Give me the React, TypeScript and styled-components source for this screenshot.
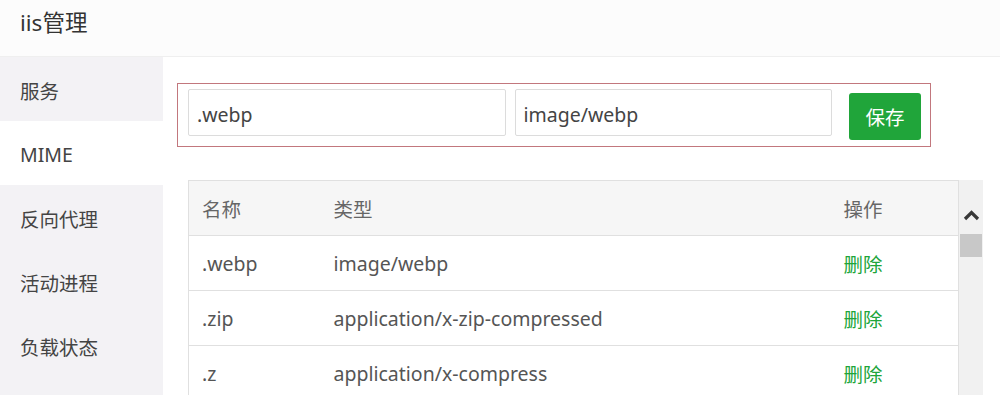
import React from "react";
import styled, { createGlobalStyle } from "styled-components";

const rows = [
  { ext: ".webp", mime: "image/webp" },
  { ext: ".zip", mime: "application/x-zip-compressed" },
  { ext: ".z", mime: "application/x-compress" },
];

const menu = ["服务", "MIME", "反向代理", "活动进程", "负载状态"];

const App = () => {
  return (
    <Page>
      <GlobalStyle />
      <Header>iis管理</Header>
      <Body>
        <Sidebar>
          {menu.map((m) => (
            <NavItem key={m} $active={m === "MIME"}>
              {m}
            </NavItem>
          ))}
        </Sidebar>

        <Main>
          <FormBox>
            <Field defaultValue=".webp" />
            <Field defaultValue="image/webp" $gap />
            <SaveButton>保存</SaveButton>
          </FormBox>

          <TableWrap>
            <Table>
              <colgroup>
                <col style={{ width: 132 }} />
                <col style={{ width: 510 }} />
                <col />
              </colgroup>
              <thead>
                <tr>
                  <Th>名称</Th>
                  <Th>类型</Th>
                  <Th>操作</Th>
                </tr>
              </thead>
              <tbody>
                {rows.map((r) => (
                  <tr key={r.ext}>
                    <Td>{r.ext}</Td>
                    <Td>{r.mime}</Td>
                    <Td>
                      <DeleteLink>删除</DeleteLink>
                    </Td>
                  </tr>
                ))}
              </tbody>
            </Table>

            <Scrollbar>
              <ScrollUp>
                <svg width="17" height="11" viewBox="0 0 17 11">
                  <polyline
                    points="2,9 8.5,2.5 15,9"
                    fill="none"
                    stroke="#383838"
                    strokeWidth="3.2"
                  />
                </svg>
              </ScrollUp>
              <Thumb />
            </Scrollbar>
          </TableWrap>
        </Main>
      </Body>
    </Page>
  );
};

export default App;

const GlobalStyle = createGlobalStyle`
  body {
    margin: 0;
    background: #ffffff;
    font-family: "Noto Sans", "Noto Sans CJK SC", sans-serif;
  }
`;

const Page = styled.div`
  width: 1000px;
  height: 395px;
  overflow: hidden;
  background: #ffffff;
`;

const Header = styled.div`
  height: 56px;
  border-bottom: 1px solid #efefef;
  background: #fcfcfc;
  padding: 1px 20px 0;
  box-sizing: content-box;
  height: 55px;
  line-height: 44px;
  font-size: 22.5px;
  color: #333;
`;

const Body = styled.div`
  display: flex;
  height: 338px;
`;

const Sidebar = styled.div`
  width: 163px;
  flex-shrink: 0;
  background: #f3f2f5;
  display: flex;
  flex-direction: column;
`;

const NavItem = styled.div<{ $active?: boolean }>`
  box-sizing: border-box;
  height: 64px;
  padding: 3px 0 0 20px;
  display: flex;
  align-items: center;
  font-size: 19.5px;
  color: #444;
  background: ${(p) => (p.$active ? "#ffffff" : "transparent")};
`;

const Main = styled.div`
  flex: 1;
  padding: 26px 0 0 14px;
`;

const FormBox = styled.div`
  box-sizing: border-box;
  width: 754px;
  height: 64px;
  border: 1px solid #c2777d;
  padding: 5px 9px 0 10px;
  display: flex;
  align-items: flex-start;
`;

const Field = styled.input<{ $gap?: boolean }>`
  box-sizing: border-box;
  width: 318px;
  height: 47px;
  margin-left: ${(p) => (p.$gap ? "9px" : "0")};
  border: 1px solid #dcdcdc;
  border-radius: 2px;
  padding: 4px 8px 0;
  font-family: inherit;
  font-size: 19.5px;
  color: #444;
  outline: none;
`;

const SaveButton = styled.button`
  width: 72px;
  height: 47px;
  margin: 4px 0 0 17px;
  border: none;
  border-radius: 3px;
  background: #20a53a;
  color: #fff;
  font-family: inherit;
  font-size: 19.5px;
  padding: 0;
`;

const TableWrap = styled.div`
  display: flex;
  margin: 33px 0 0 11px;
`;

const Table = styled.table`
  width: 771px;
  border-collapse: collapse;
  table-layout: fixed;
  border: 1px solid #e0e0e0;
`;

const Th = styled.th`
  height: 54px;
  padding: 0 0 0 13px;
  background: #f6f6f6;
  text-align: left;
  font-weight: normal;
  font-size: 19.5px;
  color: #666;
  border-bottom: 1px solid #e0e0e0;
`;

const Td = styled.td`
  height: 54px;
  padding: 0 0 0 13px;
  font-size: 19.5px;
  color: #555;
  border-bottom: 1px solid #e0e0e0;
`;

const DeleteLink = styled.span`
  color: #20a53a;
`;

const Scrollbar = styled.div`
  width: 24px;
  background: #f1f1f1;
  display: flex;
  flex-direction: column;
  align-items: center;
`;

const ScrollUp = styled.div`
  height: 24px;
  margin-top: 23px;
  display: flex;
  align-items: center;
  justify-content: center;
`;

const Thumb = styled.div`
  width: 22px;
  height: 23px;
  margin-top: 7px;
  background: #c8c8c8;
`;
